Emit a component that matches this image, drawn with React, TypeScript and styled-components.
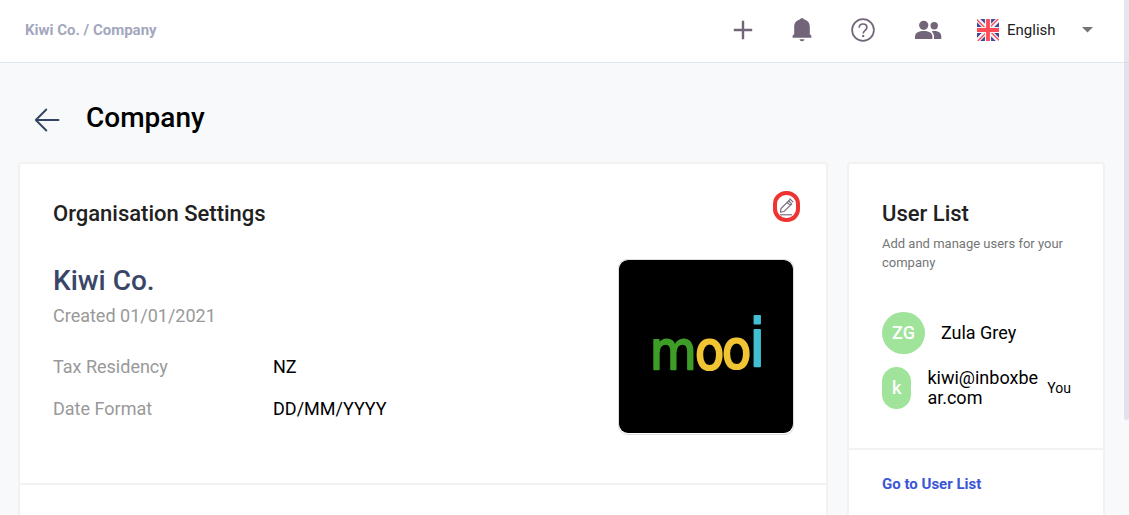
import React from "react";
import styled, { createGlobalStyle } from "styled-components";

const GlobalStyle = createGlobalStyle`
  *, *::before, *::after { box-sizing: border-box; }
  body {
    margin: 0;
    background: #f8f9fb;
    font-family: Roboto, "Liberation Sans", sans-serif;
    color: #000;
  }
  h1, h2, h3, p, dl, dd, ul { margin: 0; padding: 0; }
`;

const Page = styled.div`
  position: relative;
  height: 100vh;
  overflow: hidden;
`;

const ScrollThumb = styled.div`
  position: absolute;
  top: 0;
  right: 0;
  width: 5px;
  height: 420px;
  border-radius: 0 0 2px 2px;
  background: rgba(205, 209, 224, 0.55);
`;

const Header = styled.header`
  display: flex;
  align-items: center;
  justify-content: space-between;
  height: 63px;
  padding: 0 36px 3px 25px;
  background: #fff;
  border-bottom: 1px solid #e1e6f0;
`;

const Breadcrumb = styled.nav`
  font-size: 15px;
  font-weight: 700;
  line-height: 20px;
  color: #a3a7bd;
  a { color: inherit; text-decoration: none; }
`;

const Actions = styled.div`
  display: flex;
  align-items: center;
  gap: 35px;
  color: #736579;
`;

const IconGroup = styled.div`
  display: flex;
  align-items: center;
  gap: 39px;
`;

const IconButton = styled.button`
  display: flex;
  padding: 0;
  border: 0;
  background: none;
  color: inherit;
`;

const Language = styled.label`
  display: flex;
  align-items: center;
  gap: 8px;
  flex: none;
`;

const LanguageField = styled.span`
  display: grid;
  grid-template-columns: 75px 11px;
  align-items: center;
  color: #757575;
`;

const LanguageSelect = styled.select`
  grid-area: 1 / 1 / 2 / 3;
  appearance: none;
  width: 100%;
  margin: 0;
  padding: 0;
  border: 0;
  background: none;
  font: 400 15px/20px Roboto, sans-serif;
  color: #212121;
`;

const Caret = styled.svg`
  grid-area: 1 / 2;
  pointer-events: none;
`;

const TitleBar = styled.div`
  display: flex;
  align-items: center;
  gap: 26px;
  padding: 35px 34px 24px;
`;

const Title = styled.h1`
  font-size: 28px;
  font-weight: 500;
  line-height: 40px;
`;

const BackButton = styled(IconButton)`
  padding-top: 4px;
  color: #344563;
`;

const Columns = styled.main`
  display: grid;
  grid-template-columns: minmax(0, 1fr) 258px;
  gap: 19px;
  padding: 0 24px 0 18px;
`;

const Card = styled.section`
  min-height: 420px;
  background: #fff;
  border: 2px solid #f2f2f3;
  border-radius: 4px;
`;

const CardPart = styled.div<{ $height?: number }>`
  min-height: ${(p) => p.$height ?? 0}px;
  padding: 35px 32px 0 33px;
  border-bottom: 2px solid #f2f2f3;
`;

const CardHead = styled.div`
  display: flex;
  justify-content: space-between;
`;

const CardTitle = styled.h2`
  font-size: 22px;
  font-weight: 500;
  line-height: 30px;
  color: #212121;
`;

const EditButton = styled.button`
  display: flex;
  align-items: center;
  justify-content: center;
  width: 27px;
  height: 31px;
  margin: -8px -6px 0 0;
  padding: 0;
  border: 4px solid #ef3330;
  border-radius: 13px;
  background: #fff;
  color: #736579;
`;

const Organisation = styled.div`
  display: flex;
  align-items: flex-start;
  justify-content: space-between;
  padding-top: 30px;
`;

const OrganisationName = styled.h3`
  font-size: 28px;
  font-weight: 500;
  line-height: 44px;
  color: #3a4668;
`;

const Created = styled.p`
  font-size: 18px;
  line-height: 26px;
  color: #999;
`;

const Facts = styled.dl`
  display: grid;
  grid-template-columns: 220px auto;
  padding-top: 17px;
  font-size: 18px;
  line-height: 42px;
  dt { color: #999; }
`;

const Logo = styled.svg`
  flex: none;
  width: 176px;
  height: 176px;
  border: 1px solid #ddd;
  border-radius: 9px;
`;

const Hint = styled.p`
  padding-top: 5px;
  font-size: 13px;
  line-height: 19px;
  color: #757575;
`;

const Users = styled.ul`
  display: grid;
  gap: 13px;
  padding-top: 40px;
  list-style: none;
`;

const User = styled.li`
  display: flex;
  align-items: center;
  gap: 8px;
  font-size: 18px;
  line-height: 20px;
`;

const Avatar = styled.span`
  flex: none;
  height: 42px;
  margin-right: 8px;
  padding: 0 10px;
  border-radius: 22px;
  background: #a0e39b;
  color: #fff;
  font-weight: 500;
  line-height: 42px;
`;

const UserName = styled.span`
  flex: 1;
  min-width: 0;
  word-break: break-all;
`;

const You = styled.span`
  font-size: 14px;
`;

const CardLink = styled.a`
  display: block;
  padding: 24px 33px;
  font-size: 15px;
  font-weight: 700;
  line-height: 20px;
  color: #3a55d6;
  text-decoration: none;
`;

const PlusIcon = () => (
  <svg width="20" height="20" viewBox="0 0 20 20" stroke="currentColor" strokeWidth="2.4" aria-hidden>
    <path d="M10 .8v18.400M.8 10h18.400" />
  </svg>
);

const BellIcon = () => (
  <svg width="20" height="24" viewBox="0 0 20 24" fill="currentColor" aria-hidden>
    <path d="M10 .2c1.2 0 2 .6 2.3 1.4 3.4.9 5.5 3.6 5.5 7.2v7.4l1.2 1.1c.3.3.4.6.4 1v1.5H.6v-1.500c0-.4.1-.7.4-1l1.2-1.100V8.800c0-3.600 2.100-6.300 5.500-7.200C8 .8 8.800.2 10 .2z" />
    <path d="M7.500 21.300h5c-.2 1.300-1.200 2-2.500 2s-2.300-.7-2.500-2z" />
  </svg>
);

const HelpIcon = () => (
  <svg width="24" height="24" viewBox="0 0 24 24" fill="none" stroke="currentColor" strokeWidth="1.700" aria-hidden>
    <circle cx="12" cy="12" r="10.900" />
    <path d="M8.200 9.700c0-2.200 1.600-3.700 3.800-3.700s3.900 1.400 3.900 3.500c0 2.800-3.700 2.900-3.700 6" />
    <path d="M12.200 16.900v2.200" strokeWidth="2" />
  </svg>
);

const PeopleIcon = () => (
  <svg width="28" height="24" viewBox="0 0 28 24" fill="currentColor" aria-hidden>
    <circle cx="9.700" cy="7.300" r="4.600" />
    <circle cx="20.200" cy="7.800" r="3.700" />
    <path d="M1 21v-2.500c0-3.600 4.200-5.400 8.700-5.400s8.700 1.800 8.700 5.400V21z" />
    <path d="M20 21v-2.700c0-2-.9-3.700-2.300-4.900.8-.2 1.600-.3 2.500-.3 4 0 7.100 1.800 7.100 5.100V21z" />
  </svg>
);

const Flag = () => (
  <svg width="22" height="22" viewBox="0 0 22 22" role="img" aria-label="United Kingdom">
    <path fill="#41479b" d="M0 0h22v22H0z" />
    <path stroke="#f5f5f5" strokeWidth="4.600" d="M0 0l22 22M22 0L0 22" />
    <path stroke="#ff4b55" strokeWidth="1.300" d="M0 .8l8 8M21.200 0l-8 8M22 21.200l-8-8M.8 22l8-8" />
    <path stroke="#f5f5f5" strokeWidth="6.200" d="M11 0v22M0 11h22" />
    <path stroke="#ff4b55" strokeWidth="3.800" d="M11 0v22M0 11h22" />
  </svg>
);

const BackIcon = () => (
  <svg width="26" height="24" viewBox="0 0 26 24" fill="none" stroke="currentColor" strokeWidth="1.900" strokeLinecap="round" strokeLinejoin="round" aria-hidden>
    <path d="M24.500 12H1.800M12.300 1.500L1.800 12l10.500 10.500" />
  </svg>
);

const PencilIcon = () => (
  <svg width="15" height="19" viewBox="0 0 15 19" fill="none" stroke="currentColor" strokeWidth="1.100" aria-hidden>
    <path d="M1.500 15.200l.5-3.600L9.700 3.900l3 3L5 14.600zM9.700 3.900l1.200-1.200M8.300 5.300l3 3M10.600 1.600l3.600 3.600" />
    <path d="M1 17.800h12" />
  </svg>
);

const LETTERS = [
  { char: "m", x: 31, y: 109, size: 53, color: "#3d9d27" },
  { char: "o", x: 76, y: 109, size: 53, color: "#f0c433" },
  { char: "o", x: 103, y: 108, size: 53, color: "#f0c433" },
  { char: "i", x: 130, y: 106, size: 66, color: "#43bfd4" },
];

const MooiLogo = () => (
  <Logo viewBox="0 0 174 174" role="img" aria-label="mooi">
    <rect width="174" height="173" rx="9" fill="#000" />
    {LETTERS.map((l) => (
      <text
        key={l.x}
        x={l.x}
        y={l.y}
        fill={l.color}
        stroke={l.color}
        strokeWidth="2"
        strokeLinejoin="round"
        fontFamily='"Liberation Sans Narrow", "DejaVu Sans Condensed", sans-serif'
        fontSize={l.size}
      >
        {l.char}
      </text>
    ))}
  </Logo>
);

const USERS = [
  { initials: "ZG", name: "Zula Grey", you: false },
  { initials: "k", name: "kiwi@inboxbear.com", you: true },
];

export default function App() {
  return (
    <Page>
      <GlobalStyle />
      <Header>
        <Breadcrumb aria-label="Breadcrumb">
          <a href="#kiwi">Kiwi Co.</a> / <a href="#company">Company</a>
        </Breadcrumb>
        <Actions>
          <IconGroup>
            <IconButton aria-label="Add"><PlusIcon /></IconButton>
            <IconButton aria-label="Notifications"><BellIcon /></IconButton>
            <IconButton aria-label="Help"><HelpIcon /></IconButton>
            <IconButton aria-label="People"><PeopleIcon /></IconButton>
          </IconGroup>
          <Language>
            <Flag />
            <LanguageField>
              <LanguageSelect aria-label="Language" defaultValue="en">
                <option value="en">English</option>
              </LanguageSelect>
              <Caret width="11" height="6" viewBox="0 0 11 6" fill="currentColor" aria-hidden>
                <path d="M0 0h11L5.500 5.500z" />
              </Caret>
            </LanguageField>
          </Language>
        </Actions>
      </Header>

      <TitleBar>
        <BackButton aria-label="Back"><BackIcon /></BackButton>
        <Title>Company</Title>
      </TitleBar>

      <Columns>
        <Card>
          <CardPart $height={321}>
            <CardHead>
              <CardTitle>Organisation Settings</CardTitle>
              <EditButton aria-label="Edit organisation settings"><PencilIcon /></EditButton>
            </CardHead>
            <Organisation>
              <div>
                <OrganisationName>Kiwi Co.</OrganisationName>
                <Created>Created 01/01/2021</Created>
                <Facts>
                  <dt>Tax Residency</dt>
                  <dd>NZ</dd>
                  <dt>Date Format</dt>
                  <dd>DD/MM/YYYY</dd>
                </Facts>
              </div>
              <MooiLogo />
            </Organisation>
          </CardPart>
        </Card>

        <Card>
          <CardPart $height={286}>
            <CardTitle>User List</CardTitle>
            <Hint>Add and manage users for your company</Hint>
            <Users>
              {USERS.map((u) => (
                <User key={u.name}>
                  <Avatar>{u.initials}</Avatar>
                  <UserName>{u.name}</UserName>
                  {u.you && <You>You</You>}
                </User>
              ))}
            </Users>
          </CardPart>
          <CardLink href="#users">Go to User List</CardLink>
        </Card>
      </Columns>
      <ScrollThumb />
    </Page>
  );
}
